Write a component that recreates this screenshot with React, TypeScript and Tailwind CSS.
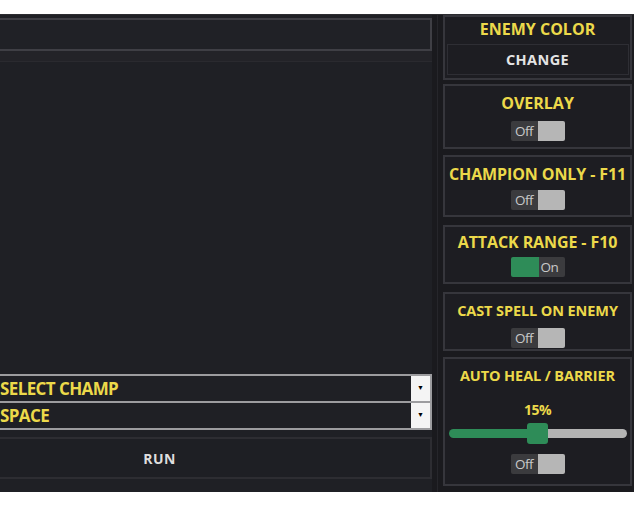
import { ReactNode } from 'react'

const yellow = 'text-[#ecd94a]'

function Toggle({ on }: { on: boolean }) {
  return (
    <div className="flex h-[20px] w-[54px] rounded-[2px] overflow-hidden text-[13.5px] leading-[20px] text-[#c9c9c9] tracking-[-0.5px]">
      {on ? (
        <>
          <div className="w-[28px] bg-[#2e8c58]" />
          <div className="flex-1 bg-[#3b3b3e] pl-[2px]">On</div>
        </>
      ) : (
        <>
          <div className="w-[27px] bg-[#3b3b3e] text-center">Off</div>
          <div className="flex-1 bg-[#b6b6b6]" />
        </>
      )}
    </div>
  )
}

function Panel({ className, children }: { className: string; children: ReactNode }) {
  return (
    <div className={`flex flex-col items-center border-2 border-[#36363c] bg-[#1d1d22] ${className}`}>
      {children}
    </div>
  )
}

function Combo({ label }: { label: string }) {
  return (
    <div className="flex h-[29px] border-2 border-[#9c9c9f] -mt-[2px] first:mt-0">
      <div className={`flex-1 flex items-center pl-[111px] text-[17px] font-bold tracking-[-0.6px] ${yellow}`}>
        {label}
      </div>
      <div className="w-[19px] bg-[#f4f4f4] flex items-center justify-center">
        <span className="text-[7px] text-black">▼</span>
      </div>
    </div>
  )
}

export default function App() {
  return (
    <div className="w-[638px] h-[506px] bg-white overflow-hidden pt-[14px]" style={{ fontFamily: '"Open Sans", Lato, sans-serif' }}>
      <div className="w-[634px] h-[478px] bg-[#1c1c20] border-t border-[#2c2c30] flex">
        {/* left column, its left part runs past the frame */}
        <div className="w-[545px] -ml-[113px] shrink-0 flex flex-col bg-[#1f2025]">
          <div className="mt-[3px] h-[33px] border-2 border-[#3f3f45] bg-[#202126]" />
          <div className="h-[10px] bg-[#232328]" />
          <div className="flex-1 border-t border-[#2a2a2f] bg-[#1f2025]" />
          <div className="flex flex-col">
            <Combo label="SELECT CHAMP" />
            <Combo label="SPACE" />
          </div>
          <div className="mt-[7px] h-[42px] border-2 border-[#2d2d32] bg-[#1e1f24] flex items-center justify-center text-[14px] font-bold text-[#dedede] tracking-[0.5px]">
            RUN
          </div>
          <div className="h-[13px]" />
        </div>

        {/* side strip */}
        <div className="w-[11px] shrink-0 flex justify-center bg-[#1a1a1e]">
          <div className="w-[1px] bg-[#26262b]" />
        </div>

        {/* right column */}
        <div className="w-[189px] shrink-0 flex flex-col bg-[#1a1a1e]">
          <Panel className="h-[65px] pt-[2px]">
            <div className={`text-[16px] font-bold leading-[20px] ${yellow}`}>ENEMY COLOR</div>
            <div className="mt-[5px] w-[182px] h-[31px] border border-[#2e2e34] flex items-center justify-center text-[14.5px] font-bold text-[#e4e4e4] tracking-[0.4px]">
              CHANGE
            </div>
          </Panel>

          <Panel className="mt-[4px] h-[65px] pt-[7px]">
            <div className={`text-[16px] font-bold leading-[20px] ${yellow}`}>OVERLAY</div>
            <div className="mt-[8px]">
              <Toggle on={false} />
            </div>
          </Panel>

          <Panel className="mt-[6px] h-[62px] pt-[7px]">
            <div className={`text-[16px] font-bold tracking-[-0.1px] leading-[20px] ${yellow}`}>CHAMPION ONLY - F11</div>
            <div className="mt-[6px]">
              <Toggle on={false} />
            </div>
          </Panel>

          <Panel className="mt-[8px] h-[59px] pt-[5px]">
            <div className={`text-[16px] font-bold tracking-[-0.1px] leading-[20px] ${yellow}`}>ATTACK RANGE - F10</div>
            <div className="mt-[5px]">
              <Toggle on={true} />
            </div>
          </Panel>

          <Panel className="mt-[8px] h-[59px] pt-[8px]">
            <div className={`text-[14.5px] font-bold tracking-[-0.1px] leading-[18px] ${yellow}`}>CAST SPELL ON ENEMY</div>
            <div className="mt-[8px]">
              <Toggle on={false} />
            </div>
          </Panel>

          <Panel className="mt-[6px] h-[129px] pt-[8px]">
            <div className={`text-[14.5px] font-bold tracking-[-0.1px] leading-[18px] ${yellow}`}>AUTO HEAL / BARRIER</div>
            <div className={`mt-[17px] text-[14px] font-bold leading-[16px] tracking-[-0.5px] ${yellow}`}>15%</div>
            {/* heal threshold slider */}
            <div className="mt-[5px] w-[178px] h-[21px] flex items-center relative">
              <div className="w-[80px] h-[9px] bg-[#2e8c58] rounded-l-full" />
              <div className="flex-1 h-[9px] bg-[#b3b3b3] rounded-r-full" />
              <div className="absolute left-[78px] top-0 w-[21px] h-[21px] rounded-[3px] bg-[#2e8c58]" />
            </div>
            <div className="mt-[10px]">
              <Toggle on={false} />
            </div>
          </Panel>
        </div>
      </div>
    </div>
  )
}
